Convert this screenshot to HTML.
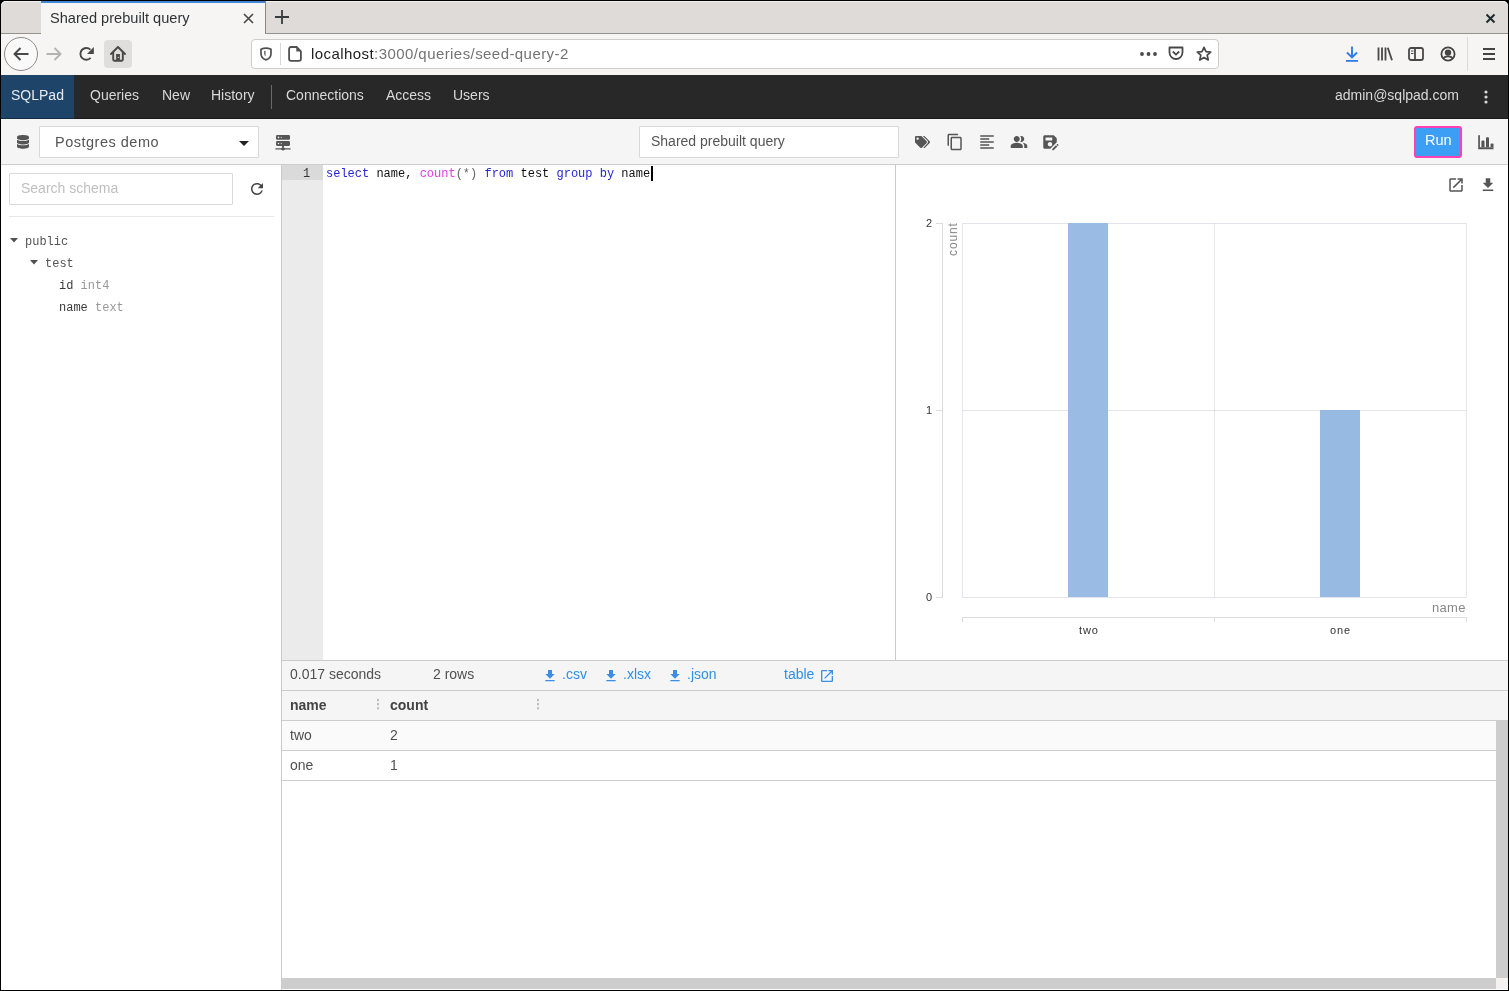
<!DOCTYPE html>
<html><head><meta charset="utf-8">
<style>
*{box-sizing:border-box;margin:0;padding:0}
html,body{width:1509px;height:991px;overflow:hidden;background:#000}
body{position:relative;font-family:"Liberation Sans",sans-serif}
.a{position:absolute}
svg{position:absolute;overflow:visible}
.t{position:absolute;white-space:nowrap;line-height:1;will-change:transform}
.mono{font-family:"Liberation Mono",monospace}
</style></head><body>
<!-- ===== window bg ===== -->
<div class="a" style="left:1px;top:1px;width:1507px;height:989px;background:#fff;border-radius:5px 5px 0 0"></div>

<!-- ===== TAB BAR ===== -->
<div class="a" style="left:1px;top:1px;width:1507px;height:33px;background:#dedbd8;border-top:1px solid #f3f2f1;border-radius:5px 5px 0 0;border-bottom:1px solid #96928e"></div>
<div class="a" style="left:41px;top:1px;width:225px;height:33px;background:#f6f5f4;border-right:1px solid #8a8682"></div>
<div class="a" style="left:41px;top:1px;width:224px;height:2px;background:#3f86d6"></div>
<div class="t chrome" id="tabtitle" style="left:50px;top:11px;font-size:14.6px;color:#2e3436">Shared prebuilt query</div>
<svg style="left:243px;top:13px" width="11" height="11" viewBox="0 0 11 11"><path d="M1 1L10 10M10 1L1 10" stroke="#474747" stroke-width="1.6"/></svg>
<svg style="left:275px;top:10px" width="14" height="14" viewBox="0 0 14 14"><path d="M7 0V14M0 7H14" stroke="#383b3c" stroke-width="1.8"/></svg>
<svg style="left:1486px;top:14px" width="9" height="9" viewBox="0 0 9 9"><path d="M0.5 0.5L8.5 8.5M8.5 0.5L0.5 8.5" stroke="#1f2a2c" stroke-width="2"/></svg>

<!-- ===== NAV TOOLBAR ===== -->
<div class="a" style="left:1px;top:34px;width:1507px;height:41px;background:#f6f5f4"></div>
<div class="a" style="left:4px;top:37px;width:34px;height:34px;border-radius:50%;border:1px solid #8e8c8a;background:#faf9f9"></div>
<svg style="left:13px;top:47px" width="16" height="14" viewBox="0 0 16 14"><path d="M15.5 7H1.8M7.5 1L1.5 7L7.5 13" stroke="#484848" stroke-width="1.9" fill="none" stroke-linejoin="miter"/></svg>
<svg style="left:46px;top:47px" width="16" height="14" viewBox="0 0 16 14"><path d="M0.5 7H14.2M8.5 1L14.5 7L8.5 13" stroke="#b3b3b3" stroke-width="1.9" fill="none"/></svg>
<svg style="left:78px;top:46px" width="17" height="16" viewBox="0 0 17 16"><path d="M12.6 11.9A5.9 5.9 0 1 1 12.4 3.6" stroke="#484848" stroke-width="1.9" fill="none"/><path d="M15.8 1V8H9Z" fill="#484848"/></svg>
<div class="a" style="left:104px;top:40px;width:28px;height:28px;border-radius:4px;background:#dfdedd"></div>
<svg style="left:110px;top:45px" width="16" height="17" viewBox="0 0 16 17"><path d="M1 9L8 2L15 9" stroke="#484848" stroke-width="1.9" fill="none" stroke-linecap="round" stroke-linejoin="round"/><path d="M3.2 7V14.6C3.2 15.2 3.6 15.7 4.2 15.7H11.8C12.4 15.7 12.8 15.2 12.8 14.6V7" stroke="#484848" stroke-width="1.9" fill="none"/><rect x="6.1" y="9" width="3.8" height="6.8" fill="#484848"/><circle cx="8.3" cy="12.4" r="0.6" fill="#e0dfde"/></svg>

<div class="a" style="left:251px;top:39px;width:968px;height:30px;background:#fff;border:1px solid #cfccc9;border-radius:4px"></div>
<svg style="left:260px;top:47px" width="12" height="14" viewBox="0 0 12 14"><path d="M6 1.1C7.8 1.1 9.5 1.6 11 2.3V6.5C11 9.9 8.8 12 6 12.9C3.2 12 1 9.9 1 6.5V2.3C2.5 1.6 4.2 1.1 6 1.1Z" stroke="#505050" stroke-width="1.7" fill="none"/><path d="M5.5 3.8V9.5C4.7 8.9 4.2 7.5 4.2 5.8V4.1Z" fill="#505050"/></svg>
<div class="a" style="left:280px;top:43px;width:1px;height:22px;background:#d8d6d4"></div>
<svg style="left:288px;top:46px" width="14" height="16" viewBox="0 0 14 16"><path d="M3 1H8.6L12.9 5.3V13C12.9 14.1 12.1 14.9 11 14.9H3C1.9 14.9 1.1 14.1 1.1 13V3C1.1 1.9 1.9 1 3 1Z" stroke="#505050" stroke-width="1.8" fill="none" stroke-linejoin="round"/><path d="M8.3 1.2V5.6H12.7Z" fill="#505050"/></svg>
<div class="t" id="url" style="left:311px;top:46px;font-size:15px;letter-spacing:0.43px;color:#737373"><span style="color:#1c1c1c">localhost</span>:3000/queries/seed-query-2</div>
<svg style="left:1140px;top:52px" width="17" height="4" viewBox="0 0 17 4"><circle cx="2" cy="2" r="1.9" fill="#484848"/><circle cx="8.5" cy="2" r="1.9" fill="#484848"/><circle cx="15" cy="2" r="1.9" fill="#484848"/></svg>
<svg style="left:1168px;top:46px" width="16" height="15" viewBox="0 0 16 15"><path d="M1.5 1.5H14.5V6.5A6.5 6.5 0 0 1 1.5 6.5Z" stroke="#484848" stroke-width="1.8" fill="none" stroke-linejoin="round"/><path d="M4.8 5.5L8 8.6L11.2 5.5" stroke="#484848" stroke-width="1.8" fill="none"/></svg>
<svg style="left:1196px;top:46px" width="16" height="16" viewBox="0 0 16 16"><path d="M8 1.3L10 5.7L14.7 6.1L11.2 9.2L12.2 14L8 11.5L3.8 14L4.8 9.2L1.3 6.1L6 5.7Z" stroke="#484848" stroke-width="1.7" fill="none" stroke-linejoin="round"/></svg>
<svg style="left:1345px;top:46px" width="14" height="16" viewBox="0 0 14 16"><path d="M7 0.5V11M2 6.5L7 11.5L12 6.5" stroke="#2f7de6" stroke-width="1.9" fill="none"/><rect x="1" y="14" width="12" height="1.8" fill="#2f7de6"/></svg>
<svg style="left:1377px;top:47px" width="16" height="14" viewBox="0 0 16 14"><path d="M1.5 0.5V13.5M5 0.5V13.5M8.5 0.5V13.5M10.8 0.8L15 13.2" stroke="#484848" stroke-width="1.8" fill="none"/></svg>
<svg style="left:1408px;top:47px" width="16" height="14" viewBox="0 0 16 14"><rect x="1" y="1" width="14" height="12" rx="2" stroke="#484848" stroke-width="1.8" fill="none"/><path d="M7 1V13" stroke="#484848" stroke-width="1.8"/><path d="M3 4H5.5M3 6.5H5.5" stroke="#484848" stroke-width="1.2"/></svg>
<svg style="left:1440px;top:46px" width="16" height="16" viewBox="0 0 16 16"><circle cx="8" cy="8" r="6.6" fill="none" stroke="#444" stroke-width="1.8"/><circle cx="8" cy="6.6" r="3.2" fill="#444"/><path d="M3 12.3C4.3 11 6 10.4 8 10.4S11.7 11 13 12.3" fill="none" stroke="#444" stroke-width="1.8"/></svg>
<div class="a" style="left:1467px;top:37px;width:1px;height:34px;background:#dcdad8"></div>
<svg style="left:1483px;top:47px" width="12" height="14" viewBox="0 0 12 14"><path d="M0 2H12M0 7H12M0 12H12" stroke="#444" stroke-width="1.9"/></svg>

<!-- ===== APP NAVBAR ===== -->
<div class="a" style="left:1px;top:75px;width:1507px;height:44px;background:#282828"></div>
<div class="a" style="left:1px;top:75px;width:73px;height:44px;background:#1f4469"></div>
<div class="a" style="left:1px;top:118px;width:1507px;height:1px;background:rgba(0,0,0,0.35)"></div>
<div class="t" style="left:11px;top:88px;font-size:14px;color:#e6ebf0">SQLPad</div>
<div class="t nav" style="left:90px;top:88px;font-size:14px;color:#d9d9d9">Queries</div>
<div class="t nav" style="left:162px;top:88px;font-size:14px;color:#d9d9d9">New</div>
<div class="t nav" style="left:211px;top:88px;font-size:14px;color:#d9d9d9">History</div>
<div class="a" style="left:271px;top:85px;width:1px;height:24px;background:#6a6a6a"></div>
<div class="t nav" style="left:286px;top:88px;font-size:14px;color:#d9d9d9">Connections</div>
<div class="t nav" style="left:386px;top:88px;font-size:14px;color:#d9d9d9">Access</div>
<div class="t nav" style="left:453px;top:88px;font-size:14px;color:#d9d9d9">Users</div>
<div class="t nav" style="left:1335px;top:88px;font-size:14px;color:#d9d9d9">admin@sqlpad.com</div>
<svg style="left:1484px;top:90px" width="4" height="14" viewBox="0 0 4 14"><circle cx="2" cy="2" r="1.6" fill="#d9d9d9"/><circle cx="2" cy="7" r="1.6" fill="#d9d9d9"/><circle cx="2" cy="12" r="1.6" fill="#d9d9d9"/></svg>

<!-- ===== TOOLBAR ===== -->
<div class="a" style="left:1px;top:119px;width:1507px;height:46px;background:#f5f5f5;border-bottom:1px solid #cdcdcd"></div>
<svg style="left:17px;top:135px" width="12" height="13.7" viewBox="0 0 448 512"><path fill="#555" d="M448 73.143v45.714C448 159.143 347.667 192 224 192S0 159.143 0 118.857V73.143C0 32.857 100.333 0 224 0s224 32.857 224 73.143zM448 176v102.857C448 319.143 347.667 352 224 352S0 319.143 0 278.857V176c48.125 33.143 136.208 48.572 224 48.572S399.874 209.143 448 176zm0 160v102.857C448 479.143 347.667 512 224 512S0 479.143 0 438.857V336c48.125 33.143 136.208 48.572 224 48.572S399.874 369.143 448 336z"/></svg>
<div class="a" style="left:39px;top:126px;width:220px;height:32px;background:#fff;border:1px solid #d9d9d9;border-radius:1px"></div>
<div class="t" style="left:55px;top:135px;font-size:14.5px;letter-spacing:0.5px;color:#555">Postgres demo</div>
<svg style="left:239px;top:141px" width="10" height="5" viewBox="0 0 10 5"><path d="M0 0H10L5 5Z" fill="#222"/></svg>
<svg style="left:275px;top:134px" width="16" height="17" viewBox="0 0 16 17"><rect x="1" y="1" width="14" height="4.8" rx="1.3" fill="#555"/><rect x="1" y="7.1" width="14" height="4.8" rx="1.3" fill="#555"/><circle cx="3.5" cy="3.4" r="0.8" fill="#f4f4f4"/><circle cx="6.3" cy="3.4" r="0.7" fill="#bbb"/><circle cx="3.5" cy="9.5" r="0.8" fill="#f4f4f4"/><circle cx="6.3" cy="9.5" r="0.7" fill="#bbb"/><rect x="7" y="11.5" width="2" height="2" fill="#555"/><rect x="0.3" y="14.2" width="15.4" height="1.3" rx="0.6" fill="#555"/><ellipse cx="8" cy="14.8" rx="2" ry="1.6" fill="#555"/></svg>

<div class="a" style="left:639px;top:126px;width:260px;height:32px;background:#fff;border:1px solid #d9d9d9;border-radius:1px"></div>
<div class="t" style="left:651px;top:134px;font-size:14px;color:#555">Shared prebuilt query</div>

<!-- tag -->
<svg style="left:915px;top:136px" width="15" height="12" viewBox="0 0 640 512"><path fill="#555" d="M497.941 225.941L286.059 14.059A48 48 0 0 0 252.118 0H48C21.49 0 0 21.49 0 48v204.118a48 48 0 0 0 14.059 33.941l211.882 211.882c18.744 18.745 49.136 18.746 67.882 0l204.118-204.118c18.745-18.745 18.745-49.137 0-67.882zM112 160c-26.51 0-48-21.49-48-48s21.49-48 48-48 48 21.490 48 48-21.49 48-48 48zm513.941 133.823L421.823 497.941c-18.745 18.745-49.137 18.745-67.882 0l-.36-.36L527.64 323.522c16.999-16.999 26.360-39.600 26.360-63.640s-9.362-46.641-26.360-63.640L331.397 0h48.721a48 48 0 0 1 33.941 14.059l211.882 211.882c18.745 18.745 18.745 49.137 0 67.882z"/></svg>
<!-- copy -->
<svg style="left:945.5px;top:133px" width="18" height="18" viewBox="0 0 24 24"><path fill="#555" d="M16 1H4c-1.1 0-2 .9-2 2v14h2V3h12V1zm3 4H8c-1.1 0-2 .9-2 2v14c0 1.1.9 2 2 2h11c1.1 0 2-.9 2-2V7c0-1.1-.9-2-2-2zm0 16H8V7h11v14z"/></svg>
<!-- align left -->
<svg style="left:977.75px;top:132.75px" width="18" height="18" viewBox="0 0 24 24"><path fill="#555" d="M15 15H3v2h12v-2zm0-8H3v2h12V7zM3 13h18v-2H3v2zm0 8h18v-2H3v2zM3 3v2h18V3H3z"/></svg>
<!-- people -->
<svg style="left:1010.25px;top:133px" width="18" height="18" viewBox="0 0 24 24"><path fill="#555" d="M16.67 13.13C18.04 14.06 19 15.32 19 17v3h4v-3c0-2.18-3.57-3.47-6.33-3.870zM15 12c2.21 0 4-1.79 4-4s-1.79-4-4-4c-.47 0-.91.1-1.33.24C14.5 5.27 15 6.58 15 8s-.5 2.73-1.33 3.76c.42.14.86.24 1.33.24zM9 12c2.21 0 4-1.79 4-4s-1.79-4-4-4-4 1.79-4 4 1.79 4 4 4zM9 13c-2.67 0-8 1.34-8 4v3h16v-3c0-2.66-5.33-4-8-4z"/></svg>
<!-- save as -->
<svg style="left:1040.75px;top:132.75px" width="18" height="18" viewBox="0 0 24 24"><path fill="#555" d="M21 12.4V7l-4-4H5c-1.11 0-2 .9-2 2v14c0 1.1.89 2 2 2h7.4l8.6-8.6zM15 15c0 1.66-1.34 3-3 3s-3-1.34-3-3 1.34-3 3-3 3 1.34 3 3zM6 6h9v4H6V6zm13.99 10.25l1.77 1.770L16.77 23H15v-1.77l4.99-4.980zm3.26.26l-.85.85-1.77-1.77.85-.85c.2-.2.51-.2.71 0l1.06 1.06c.2.2.2.52 0 .71z"/></svg>

<div class="a" style="left:1414px;top:126px;width:48px;height:32px;background:#3d9ef5;border:2px solid #ff3fb4;border-radius:3px"></div>
<div class="t" style="left:1425px;top:133px;font-size:14.5px;color:#fff">Run</div>
<svg style="left:1478px;top:134.8px" width="16" height="14.2" viewBox="0 0 16 14.2"><path d="M0.2 0.6C0.2 0.2 0.5 0 1 0S1.9 0.2 1.9 0.6V12.3H15.5V14.2H0.2Z" fill="#555"/><path d="M3.4 6.4C3.4 5.7 3.8 5.4 4.9 5.4S6.5 5.7 6.5 6.4V12.3H3.4Z" fill="#555"/><path d="M8 3.2C8 2.5 8.4 2.2 9.5 2.2S11 2.5 11 3.2V12.3H8Z" fill="#555"/><path d="M12.6 9.6C12.6 8.9 13 8.6 14.1 8.6S15.5 8.9 15.5 9.6V12.3H12.6Z" fill="#555"/></svg>

<!-- ===== SIDEBAR ===== -->
<div class="a" style="left:1px;top:165px;width:281px;height:825px;background:#fff;border-right:1px solid #cbcbcb"></div>
<div class="a" style="left:9px;top:173px;width:224px;height:32px;background:#fff;border:1px solid #d9d9d9;border-radius:1px"></div>
<div class="t" style="left:21px;top:181px;font-size:14px;color:#bfbfbf">Search schema</div>
<svg style="left:247.5px;top:180px" width="18" height="18" viewBox="0 0 24 24"><path fill="#444" d="M17.65 6.35C16.2 4.9 14.21 4 12 4c-4.42 0-7.99 3.58-7.990 8s3.570 8 7.990 8c3.730 0 6.840-2.550 7.730-6h-2.080c-.820 2.330-3.040 4-5.650 4-3.310 0-6-2.690-6-6s2.690-6 6-6c1.660 0 3.140.690 4.220 1.780L13 11h7V4l-2.350 2.350z"/></svg>
<div class="a" style="left:9px;top:216px;width:265px;height:1px;background:#e8e8e8"></div>
<svg style="left:10px;top:238px" width="8" height="5" viewBox="0 0 8 5"><path d="M0 0H8L4 4.6Z" fill="#505050"/></svg>
<div class="t mono" style="left:25px;top:236px;font-size:12px;color:#555">public</div>
<svg style="left:30px;top:260px" width="8" height="5" viewBox="0 0 8 5"><path d="M0 0H8L4 4.6Z" fill="#505050"/></svg>
<div class="t mono" style="left:45px;top:258px;font-size:12px;color:#555">test</div>
<div class="t mono" style="left:59px;top:280px;font-size:12px;color:#3a3a3a">id <span style="color:#999">int4</span></div>
<div class="t mono" style="left:59px;top:302px;font-size:12px;color:#3a3a3a">name <span style="color:#999">text</span></div>

<!-- ===== EDITOR ===== -->
<div class="a" style="left:282px;top:165px;width:614px;height:495px;background:#fff;border-right:1px solid #cbcbcb"></div>
<div class="a" style="left:282px;top:165px;width:41px;height:495px;background:#ebebeb"></div>
<div class="a" style="left:282px;top:165px;width:41px;height:15px;background:#dadada"></div>
<div class="t mono" style="left:303px;top:168px;font-size:12px;color:#333">1</div>
<div class="t mono" style="left:326px;top:168px;font-size:12px;color:#111"><span style="color:#2525d8">select</span> name, <span style="color:#e63be6">count</span><span style="color:#666">(*)</span> <span style="color:#2525d8">from</span> test <span style="color:#2525d8">group</span> <span style="color:#2525d8">by</span> name</div>
<div class="a" style="left:651px;top:166px;width:2px;height:15px;background:#000"></div>

<!-- ===== CHART ===== -->
<svg style="left:1446.75px;top:175.75px" width="18" height="18" viewBox="0 0 24 24"><path fill="#555" d="M19 19H5V5h7V3H5c-1.11 0-2 .9-2 2v14c0 1.1.89 2 2 2h14c1.1 0 2-.9 2-2v-7h-2v7zM14 3v2h3.59l-9.83 9.83 1.41 1.41L19 6.41V10h2V3h-7z"/></svg>
<svg style="left:1478.75px;top:175.75px" width="18" height="18" viewBox="0 0 24 24"><path fill="#555" d="M19 9h-4V3H9v6H5l7 7 7-7zM5 18v2h14v-2H5z"/></svg>

<svg style="left:0;top:0" width="1509" height="991">
  <g fill="none" stroke-width="1">
    <path d="M962.5 223.5H1466.5M962.5 410.5H1466.5M962.5 597.5H1466.5" stroke="rgba(40,40,100,0.13)"/>
    <path d="M962.5 223.5V597.5M1214.5 223.5V597.5M1466.5 223.5V597.5" stroke="rgba(40,50,50,0.11)"/>
  </g>
  <g fill="none" stroke="#dcdcdc" stroke-width="1">
    <path d="M942.5 223V598M936 223.5H942.5M936 410.5H942.5M936 597.5H942.5"/>
    <path d="M962 617.5H1467M962.5 617V622M1214.5 617V622M1466.5 617V622"/>
  </g>
  <rect x="1068" y="223" width="40" height="374" fill="#97bae3" opacity="0.98"/>
  <rect x="1320" y="410" width="40" height="187" fill="#97bae3"/>
</svg>
<div class="t" style="left:926px;top:218px;font-size:11px;color:#333">2</div>
<div class="t" style="left:926px;top:405px;font-size:11px;color:#333">1</div>
<div class="t" style="left:926px;top:592px;font-size:11px;color:#333">0</div>
<div class="t" style="left:1432px;top:601px;font-size:13px;letter-spacing:0.3px;color:#888">name</div>
<div class="t" style="left:1079px;top:625px;font-size:11px;letter-spacing:0.9px;color:#333">two</div>
<div class="t" style="left:1330px;top:625px;font-size:11px;letter-spacing:0.9px;color:#333">one</div>
<div class="t" style="left:947px;top:256px;font-size:12px;color:#888;letter-spacing:0.9px;transform-origin:0 0;transform:rotate(-90deg)">count</div>

<!-- ===== RESULTS BAR ===== -->
<div class="a" style="left:282px;top:660px;width:1226px;height:31px;background:#f5f5f5;border-top:1px solid #cbcbcb;border-bottom:1px solid #cbcbcb"></div>
<div class="t" style="left:290px;top:667px;font-size:14px;color:#505050">0.017 seconds</div>
<div class="t" style="left:433px;top:667px;font-size:14px;color:#505050">2 rows</div>
<svg style="left:541.7px;top:667.8px" width="16" height="16" viewBox="0 0 24 24"><path fill="#3a8ee6" d="M19 9h-4V3H9v6H5l7 7 7-7zM5 18v2h14v-2H5z"/></svg>
<div class="t" style="left:562px;top:667px;font-size:14px;color:#2f8fe6">.csv</div>
<svg style="left:602.7px;top:667.8px" width="16" height="16" viewBox="0 0 24 24"><path fill="#3a8ee6" d="M19 9h-4V3H9v6H5l7 7 7-7zM5 18v2h14v-2H5z"/></svg>
<div class="t" style="left:623px;top:667px;font-size:14px;color:#2f8fe6">.xlsx</div>
<svg style="left:666.7px;top:667.8px" width="16" height="16" viewBox="0 0 24 24"><path fill="#3a8ee6" d="M19 9h-4V3H9v6H5l7 7 7-7zM5 18v2h14v-2H5z"/></svg>
<div class="t" style="left:687px;top:667px;font-size:14px;color:#2f8fe6">.json</div>
<div class="t" style="left:784px;top:667px;font-size:14px;color:#2f8fe6">table</div>
<svg style="left:819px;top:668px" width="16" height="16" viewBox="0 0 24 24"><path fill="#3a8ee6" d="M19 19H5V5h7V3H5c-1.11 0-2 .9-2 2v14c0 1.1.89 2 2 2h14c1.1 0 2-.9 2-2v-7h-2v7zM14 3v2h3.59l-9.83 9.83 1.41 1.41L19 6.41V10h2V3h-7z"/></svg>

<!-- ===== TABLE ===== -->
<div class="a" style="left:282px;top:691px;width:1226px;height:30px;background:#f5f5f5;border-bottom:1px solid #cdcdcd"></div>
<div class="t" style="left:290px;top:698px;font-size:14px;color:#444;font-weight:bold">name</div>
<div class="t" style="left:390px;top:698px;font-size:14px;color:#444;font-weight:bold">count</div>
<svg style="left:377px;top:699px" width="2" height="11" viewBox="0 0 2 11"><rect x="0" y="0" width="2" height="2.2" fill="#bdbdbd"/><rect x="0" y="4.1" width="2" height="2.2" fill="#bdbdbd"/><rect x="0" y="8.2" width="2" height="2.2" fill="#bdbdbd"/></svg>
<svg style="left:537px;top:699px" width="2" height="11" viewBox="0 0 2 11"><rect x="0" y="0" width="2" height="2.2" fill="#bdbdbd"/><rect x="0" y="4.1" width="2" height="2.2" fill="#bdbdbd"/><rect x="0" y="8.2" width="2" height="2.2" fill="#bdbdbd"/></svg>
<div class="a" style="left:282px;top:721px;width:1214px;height:30px;background:#fafafa;border-bottom:1px solid #cdcdcd"></div>
<div class="t" style="left:290px;top:728px;font-size:14px;color:#505050">two</div>
<div class="t" style="left:390px;top:728px;font-size:14px;color:#505050">2</div>
<div class="a" style="left:282px;top:751px;width:1214px;height:30px;background:#fff;border-bottom:1px solid #cdcdcd"></div>
<div class="t" style="left:290px;top:758px;font-size:14px;color:#505050">one</div>
<div class="t" style="left:390px;top:758px;font-size:14px;color:#505050">1</div>
<!-- scrollbars -->
<div class="a" style="left:1496px;top:721px;width:12px;height:257px;background:#cdcdcd"></div>
<div class="a" style="left:282px;top:978px;width:1214px;height:11px;background:#cdcdcd"></div>
<div class="a" style="left:1496px;top:978px;width:12px;height:11px;background:#f4f3f1"></div>
</body></html>
